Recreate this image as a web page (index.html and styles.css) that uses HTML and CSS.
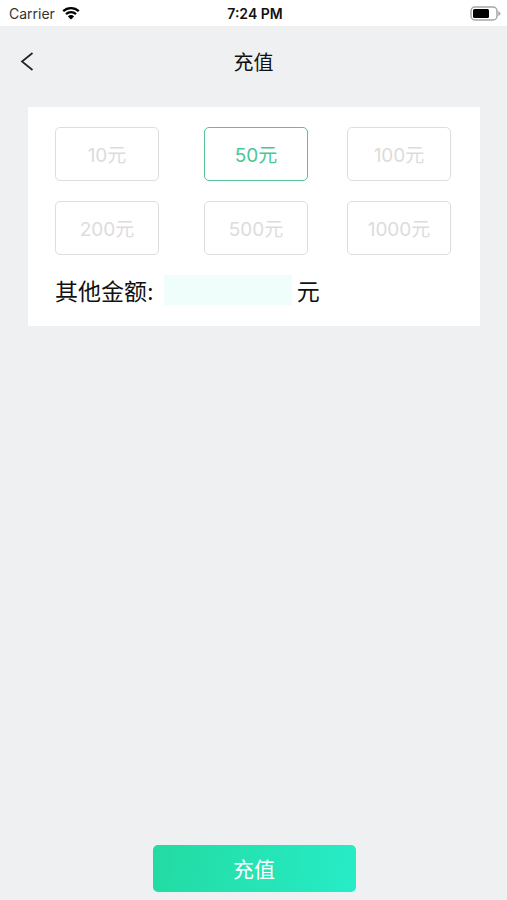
FILE: index.html
```html
<!DOCTYPE html>
<html lang="zh-CN">
<head>
  <meta charset="utf-8">
  <meta name="viewport" content="width=device-width, initial-scale=1">
  <title>充值</title>
  <link rel="stylesheet" href="styles.css">
</head>
<body>
  <div class="status">
    <div class="carrier">
      <span>Carrier</span>
      <svg class="wifi" viewBox="0 0 18 14" aria-hidden="true">
        <path d="M1.2 5.2a11.2 11.2 0 0 1 15.6 0M4 8.2a7.2 7.2 0 0 1 10 0" fill="none" stroke="#000" stroke-width="2.3"/>
        <path d="M9 13.6 5.9 10.4a4.4 4.4 0 0 1 6.2 0z"/>
      </svg>
    </div>
    <time class="time">7:24 PM</time>
    <svg class="battery" viewBox="0 0 31 15" aria-hidden="true">
      <rect x="1" y="1" width="26" height="13" rx="4" fill="#fff" stroke="#a6a6a6" stroke-width="1.5"/>
      <rect x="3" y="3" width="16" height="9" rx="1.5"/>
      <path d="M28.3 5v5q2.2-1 2.2-2.5T28.3 5z" fill="#a6a6a6"/>
    </svg>
  </div>
  <header class="nav">
    <button class="back" type="button" aria-label="返回">
      <svg viewBox="0 0 14 20" aria-hidden="true"><path d="M12.500 2 2 10.500l10.500 8.500" fill="none" stroke="#222" stroke-width="1.7"/></svg>
    </button>
    <h1 class="title">充值</h1>
  </header>
  <form class="form">
    <section class="card">
      <div class="amounts">
        <button class="amount" type="button">10元</button>
        <button class="amount selected" type="button" aria-pressed="true">50元</button>
        <button class="amount" type="button">100元</button>
        <button class="amount" type="button">200元</button>
        <button class="amount" type="button">500元</button>
        <button class="amount" type="button">1000元</button>
      </div>
      <div class="other">
        <label for="other">其他金额:</label>
        <input class="field" id="other" type="text" inputmode="decimal">
        <span>元</span>
      </div>
    </section>
    <button class="submit" type="submit">充值</button>
  </form>
</body>
</html>
```
FILE: styles.css
```css
* {
  box-sizing: border-box;
}

body {
  margin: 0;
  min-height: 100vh;
  display: flex;
  flex-direction: column;
  background: #eef0f2;
  color: #111;
  font-family: Inter, "Noto Sans CJK SC", sans-serif;
}

button,
input {
  font: inherit;
}

.status {
  display: grid;
  grid-template-columns: 1fr auto 1fr;
  align-items: center;
  height: 26px;
  padding: 0 6px 0 9px;
  background: #fff;
  font-size: 14px;
}

.carrier {
  display: flex;
  align-items: center;
  gap: 7px;
  color: #333;
}

.wifi {
  width: 18px;
  height: 14px;
}

.time {
  font-size: 14px;
  font-weight: 600;
}

.battery {
  justify-self: end;
  width: 31px;
  height: 15px;
}

.nav {
  display: grid;
  grid-template-columns: 1fr auto 1fr;
  align-items: center;
  height: 70px;
  padding: 0 18px;
}

.back {
  display: flex;
  justify-self: start;
  padding: 2px;
  border: 0;
  background: none;
}

.back svg {
  width: 14px;
  height: 20px;
}

.title {
  margin: 0;
  font-size: 20px;
  font-weight: 400;
}

.form {
  flex: 1;
  display: flex;
  flex-direction: column;
  align-items: center;
  justify-content: space-between;
  padding: 11px 27px 8px 28px;
}

.card {
  width: 100%;
  padding: 20px 29px 21px 27px;
  background: #fff;
}

.amounts {
  display: grid;
  grid-template-columns: 149fr 143fr 104px;
  row-gap: 20px;
}

.amount {
  width: 104px;
  height: 54px;
  padding: 0 0 2px;
  border: 1px solid #dedede;
  border-radius: 5px;
  background: #fff;
  color: #dcdcdc;
  font-size: 19px;
}

.selected {
  border-color: #56c397;
  color: #4bc792;
}

.other {
  display: flex;
  align-items: center;
  height: 30px;
  margin-top: 20px;
  font-size: 23px;
}

.field {
  width: 128px;
  height: 30px;
  margin: 0 5px 0 10px;
  padding: 0 8px;
  border: 0;
  background: #effdfb;
}

.submit {
  width: 203px;
  height: 47px;
  padding: 0 0 2px;
  border: 0;
  border-radius: 5px;
  background: linear-gradient(100deg, #23dba2, #27ecc7);
  color: #fff;
  font-size: 21px;
}
```
